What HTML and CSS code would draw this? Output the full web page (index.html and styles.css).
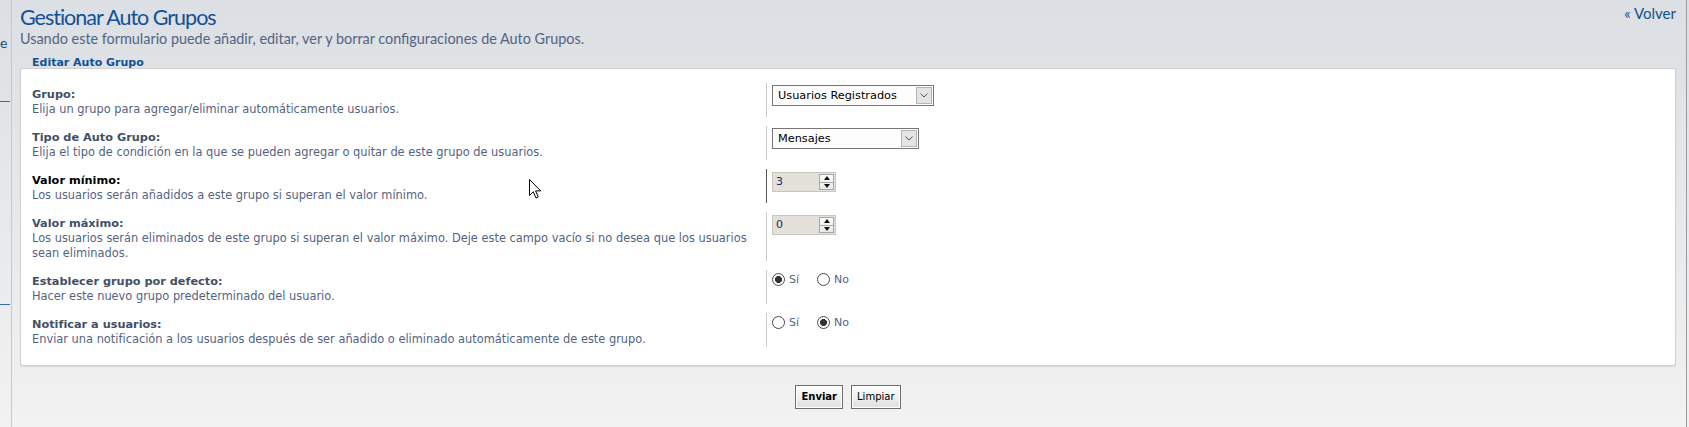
FILE: index.html
```html
<!DOCTYPE html>
<html lang="es">
<head>
<meta charset="utf-8">
<title>Gestionar Auto Grupos</title>
<link rel="stylesheet" href="styles.css">
</head>
<body>
<div class="page">
  <aside class="side">
    <span class="side-e">e</span>
    <span class="side-line first"></span>
    <span class="side-line second"></span>
  </aside>
  <main class="main">
    <header class="head">
      <div class="head-text">
        <h1 class="title">Gestionar Auto Grupos</h1>
        <p class="sub">Usando este formulario puede añadir, editar, ver y borrar configuraciones de Auto Grupos.</p>
      </div>
      <a class="back" href="#">« Volver</a>
    </header>

    <div class="legend">Editar Auto Grupo</div>
    <form class="panel">
      <div class="row">
        <div class="dt">
          <div class="lab">Grupo:</div>
          <div class="desc">Elija un grupo para agregar/eliminar automáticamente usuarios.</div>
        </div>
        <div class="dd">
          <div class="select w1">
            <span class="select-text">Usuarios Registrados</span>
            <span class="select-arrow"><svg width="8" height="5" viewBox="0 0 8 5"><path d="M0.5 0.5 L4 4 L7.5 0.5" fill="none" stroke="#555" stroke-width="1"/></svg></span>
          </div>
        </div>
      </div>

      <div class="row">
        <div class="dt">
          <div class="lab">Tipo de Auto Grupo:</div>
          <div class="desc">Elija el tipo de condición en la que se pueden agregar o quitar de este grupo de usuarios.</div>
        </div>
        <div class="dd">
          <div class="select w2">
            <span class="select-text">Mensajes</span>
            <span class="select-arrow"><svg width="8" height="5" viewBox="0 0 8 5"><path d="M0.5 0.5 L4 4 L7.5 0.5" fill="none" stroke="#555" stroke-width="1"/></svg></span>
          </div>
        </div>
      </div>

      <div class="row hover">
        <div class="dt">
          <div class="lab">Valor mínimo:</div>
          <div class="desc">Los usuarios serán añadidos a este grupo si superan el valor mínimo.</div>
        </div>
        <div class="dd">
          <div class="num">
            <span class="num-text">3</span>
            <span class="spin"><span class="spin-up"></span><span class="spin-down"></span></span>
          </div>
        </div>
      </div>

      <div class="row">
        <div class="dt">
          <div class="lab">Valor máximo:</div>
          <div class="desc">Los usuarios serán eliminados de este grupo si superan el valor máximo. Deje este campo vacío si no desea que los usuarios<br>sean eliminados.</div>
        </div>
        <div class="dd">
          <div class="num">
            <span class="num-text">0</span>
            <span class="spin"><span class="spin-up"></span><span class="spin-down"></span></span>
          </div>
        </div>
      </div>

      <div class="row">
        <div class="dt">
          <div class="lab">Establecer grupo por defecto:</div>
          <div class="desc">Hacer este nuevo grupo predeterminado del usuario.</div>
        </div>
        <div class="dd radios">
          <label class="opt"><input type="radio" class="radio" name="def" checked>Sí</label>
          <label class="opt"><input type="radio" class="radio" name="def">No</label>
        </div>
      </div>

      <div class="row">
        <div class="dt">
          <div class="lab">Notificar a usuarios:</div>
          <div class="desc">Enviar una notificación a los usuarios después de ser añadido o eliminado automáticamente de este grupo.</div>
        </div>
        <div class="dd radios">
          <label class="opt"><input type="radio" class="radio" name="notify">Sí</label>
          <label class="opt"><input type="radio" class="radio" name="notify" checked>No</label>
        </div>
      </div>
    </form>

    <div class="actions">
      <button class="btn strong" type="button">Enviar</button>
      <button class="btn" type="button">Limpiar</button>
    </div>
  </main>
  <span class="strip"></span>
  <svg class="cursor" width="13" height="20" viewBox="0 0 13 20"><path d="M0.5 0.5 L0.5 16.5 L4.3 12.8 L7 19 L9.3 18 L6.6 11.9 L11.7 11.9 Z" fill="#fff" stroke="#000" stroke-width="1" stroke-linejoin="miter"/></svg>
</div>
</body>
</html>
```

FILE: styles.css
```css
html, body {
  margin: 0;
  padding: 0;
}
body {
  height: 427px;
  overflow: hidden;
  font-family: "DejaVu Sans", Verdana, sans-serif;
  background: linear-gradient(#dcdfe3, #f2f2f2);
}
.page {
  position: relative;
  display: flex;
  height: 427px;
}
.side {
  width: 11px;
  flex: none;
  overflow: hidden;
  display: flex;
  flex-direction: column;
}
.side-e {
  margin-top: 35px;
  font: 14px/16px Lato, sans-serif;
  color: #105289;
}
.side-line {
  display: block;
  width: 10px;
  height: 1px;
  background: #2f6fb0;
}
.side-line.first { margin-top: 50px; }
.side-line.second { margin-top: 202px; }

.main {
  flex: 1;
  min-width: 0;
  border-left: 1px solid #c8c8c8;
  border-right: 1px solid #9c9c9c;
  padding: 0 10px 0 8px;
}
.strip {
  width: 2px;
  flex: none;
}
.head {
  display: flex;
  justify-content: space-between;
  align-items: flex-start;
}
.title {
  margin: 4px 0 0;
  font: normal 21.5px/27px Lato, sans-serif;
  letter-spacing: -1px;
  color: #115098;
}
.sub {
  margin: 0;
  font: 14.4px/16px Lato, sans-serif;
  color: #536482;
}
.back {
  margin-top: 5px;
  font: 15px/16px Lato, sans-serif;
  color: #105289;
  text-decoration: none;
}
.legend {
  position: relative;
  z-index: 1;
  margin-top: 10px;
  padding-left: 12px;
  font: bold 11px/12px "DejaVu Sans", Verdana, sans-serif;
  color: #115098;
}
.panel {
  display: block;
  margin: -1px 0 0;
  background: #fff;
  border: 1px solid #d0d0d0;
  border-radius: 3px;
  box-shadow: 0 1px 1px rgba(0, 0, 0, 0.12);
  padding: 14px 11px 18px 11px;
}
.row {
  display: flex;
  margin-bottom: 9px;
}
.row:last-child { margin-bottom: 0; }
.dt {
  width: 734px;
  flex: none;
  padding-top: 5px;
}
.lab {
  font: bold 11.3px/14px "DejaVu Sans", Verdana, sans-serif;
  color: #425067;
}
.desc {
  font: 11.4px/15px "DejaVu Sans", Verdana, sans-serif;
  color: #536482;
}
.dd {
  border-left: 1px solid #cccccc;
  padding: 2px 0 0 5px;
}
.row.hover .lab { color: #000; }
.row.hover .dd { border-left-color: #555; }

.select {
  display: flex;
  align-items: stretch;
  height: 19px;
  border: 1px solid #767676;
  background: #fdfdfd;
  box-sizing: content-box;
}
.select.w1 { width: 160px; }
.select.w2 { width: 145px; }
.select-text {
  flex: 1;
  padding-left: 5px;
  font: 11.3px/19px "DejaVu Sans", Verdana, sans-serif;
  color: #000;
  white-space: nowrap;
}
.select-arrow {
  width: 14px;
  margin: 1px;
  border: 1px solid #b4b4b4;
  background: #e4e4e4;
  display: flex;
  align-items: center;
  justify-content: center;
}

.num {
  display: flex;
  width: 62px;
  height: 18px;
  border: 1px solid #c9c5bf;
  background: #e4e0da;
  margin-top: 1px;
}
.num-text {
  flex: 1;
  padding-left: 3px;
  font: 11px/18px "DejaVu Sans", Verdana, sans-serif;
  color: #1e2a5a;
}
.spin {
  width: 15px;
  margin: 1px 1px 1px 0;
  display: flex;
  flex-direction: column;
  border: 1px solid #a7a7a7;
  background: linear-gradient(#fbfbfb, #e9e9e9);
  box-sizing: border-box;
}
.spin-up, .spin-down {
  flex: 1;
  display: flex;
  align-items: center;
  justify-content: center;
}
.spin-up { border-bottom: 1px solid #a7a7a7; }
.spin-up::before {
  content: "";
  border-left: 3px solid transparent;
  border-right: 3px solid transparent;
  border-bottom: 4px solid #111;
}
.spin-down::before {
  content: "";
  border-left: 3px solid transparent;
  border-right: 3px solid transparent;
  border-top: 4px solid #111;
}

.radios {
  display: flex;
  align-items: flex-start;
  padding-top: 3px;
}
.opt {
  display: flex;
  align-items: center;
  font: 11px/13px "DejaVu Sans", Verdana, sans-serif;
  color: #536482;
  margin-right: 18px;
}
.radio {
  appearance: none;
  -webkit-appearance: none;
  width: 13px;
  height: 13px;
  margin: 0 4px 0 0;
  border: 1px solid #4a4a4a;
  border-radius: 50%;
  background: #fff;
  box-sizing: border-box;
}
.radio:checked {
  background: radial-gradient(circle, #333 0, #333 3.2px, #fff 3.8px);
}

.actions {
  display: flex;
  justify-content: center;
  gap: 8px;
  margin-top: 19px;
}
.btn {
  height: 24px;
  padding: 0 5px;
  border: 1px solid #6e6e6e;
  box-shadow: inset 0 0 0 1px #fff;
  background: linear-gradient(#ffffff, #dedede);
  font: 10px/20px "DejaVu Sans", Verdana, sans-serif;
  color: #000;
}
.btn.strong { font-weight: bold; }

.cursor {
  position: absolute;
  left: 529px;
  top: 179px;
}
```
